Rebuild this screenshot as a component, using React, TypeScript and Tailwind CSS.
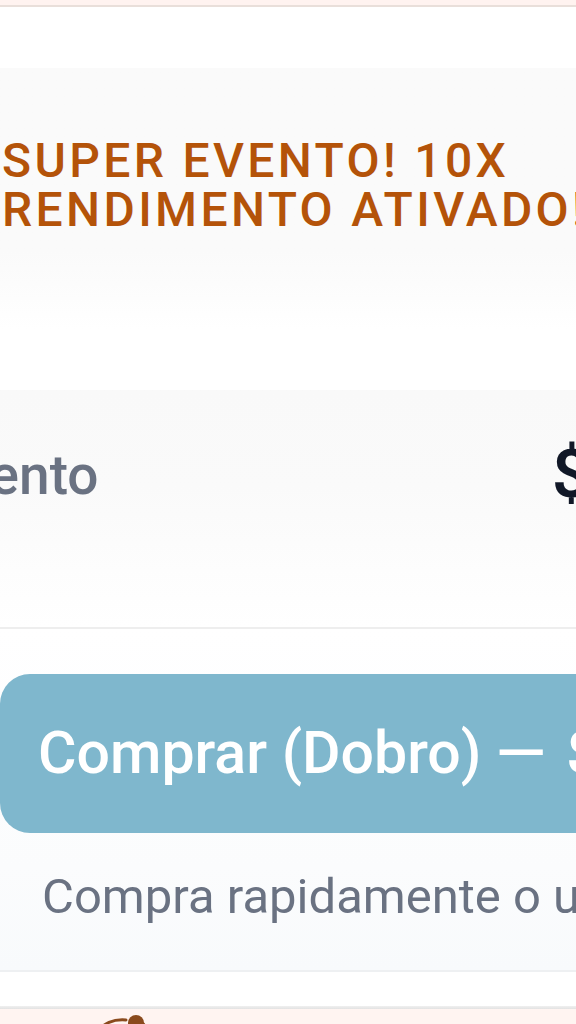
export default function App() {
  return (
    <div
      className="w-[576px] h-[1024px] overflow-hidden bg-white flex flex-col"
      style={{ fontFamily: 'Roboto, "Noto Sans", sans-serif' }}
    >
      {/* Barra superior */}
      <div className="h-[5px] shrink-0 bg-[#fff3f0]" />
      <div className="h-[2px] shrink-0 bg-[#e9dfda]" />
      <div className="h-[61px] shrink-0 bg-white" />

      {/* Banner do evento */}
      <div className="h-[262px] shrink-0 bg-gradient-to-b from-[#fafafa] via-[#fafafa] via-70% to-white pt-[68px] pl-[2px]">
        <p className="text-[48px] leading-[49px] font-medium tracking-[0.07em] text-[#b45309] whitespace-nowrap">
          SUPER EVENTO! 10X
          <br />
          RENDIMENTO ATIVADO!
        </p>
      </div>

      <div className="h-[60px] shrink-0 bg-white" />

      {/* Linha de rendimento */}
      <div className="h-[239px] shrink-0 bg-gradient-to-b from-[#f9f9f9] via-[#fafafa] via-40% to-white border-b-2 border-[#eeeeee] pt-[52px]">
        <div className="flex items-center justify-between w-[1000px] ml-[-198px]">
          <span className="text-[55px] leading-none font-medium text-gray-500 whitespace-nowrap">
            Rendimento
          </span>
          <span className="text-[66px] leading-none font-semibold text-[#111827] whitespace-nowrap w-[250px] shrink-0">
            $ 1.250
          </span>
        </div>
      </div>

      {/* Botão e descrição */}
      <div className="h-[343px] shrink-0 bg-gradient-to-b from-white via-[#fbfcfd] via-70% to-[#f8fafc] border-b-2 border-[#eef0f2] pt-[45px]">
        <div className="w-[760px] h-[159px] rounded-[30px] bg-[#7fb7cd] flex items-center pl-[38px]">
          <span className="text-[59px] font-medium text-white whitespace-nowrap">
            Comprar (Dobro) <span className="inline-block ml-[2px] mr-[8px] scale-x-110">—</span> $ 50
          </span>
        </div>
        <p className="mt-[27px] pl-[42px] text-[49px] text-gray-500 whitespace-nowrap">
          Compra rapidamente o upgrade
        </p>
      </div>

      <div className="h-[34px] shrink-0 bg-white" />
      <div className="h-[3px] shrink-0 bg-gradient-to-b from-[#f0f0f0] to-[#e2e2e2]" />

      {/* Barra inferior */}
      <div className="flex-1 bg-[#fff4f1] pl-[96px] pt-[5px]">
        <svg width="52" height="20" viewBox="0 0 52 20" fill="none">
          <path d="M2 19 C 6 9, 18 5, 30 6" stroke="#8a4a1d" strokeWidth="3" strokeLinecap="round" />
          <circle cx="40" cy="9" r="8" fill="#8a4a1d" />
          <circle cx="44" cy="13" r="6" fill="#8a4a1d" />
        </svg>
      </div>
    </div>
  );
}
